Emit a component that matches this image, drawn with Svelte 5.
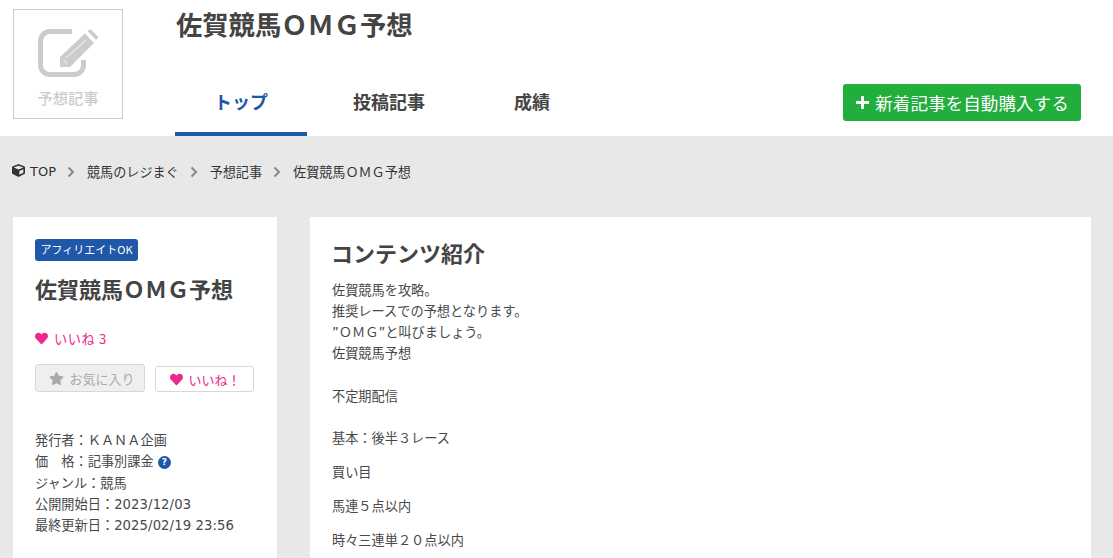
<script>
  const crumbs = ['競馬のレジまぐ', '予想記事', '佐賀競馬ＯＭＧ予想'];
  const body = ['佐賀競馬を攻略。', '推奨レースでの予想となります。', '”ＯＭＧ”と叫びましょう。', '佐賀競馬予想', '', '不定期配信', ''];
  const paras = ['基本：後半３レース', '買い目', '馬連５点以内', '時々三連単２０点以内'];
  const heart = 'M462.3 62.6C407.5 15.9 326 24.3 275.7 76.2L256 96.5l-19.7-20.3C186.1 24.3 104.5 15.9 49.7 62.6c-62.8 53.6-66.1 149.8-9.9 207.9l193.5 199.8c12.5 12.9 32.8 12.9 45.3 0l193.5-199.8c56.3-58.1 53-154.3-9.8-207.9z';
</script>

<div class="page">
  <header class="header">
    <div class="logo">
      <svg class="edit" viewBox="0 0 61 48" aria-hidden="true">
        <path class="edit-box" d="M34 2.500H12A9.500 9.500 0 0 0 2.500 12V36A9.500 9.500 0 0 0 12 45.500H36A9.500 9.500 0 0 0 45.500 36V31"/>
        <path class="edit-pen" d="M22 28 47 4.500 56 14 32 38H22Z"/>
        <path class="edit-pen" d="M49.500 2 52.500 0 60.500 8 58 11Z"/>
        <path class="edit-line" d="M28 29 48 11"/>
        <path class="edit-line" d="M25.500 31 29 35"/>
      </svg>
      <span class="logo-text">予想記事</span>
    </div>
    <div class="head-main">
      <h1>佐賀競馬ＯＭＧ予想</h1>
      <div class="nav-row">
        <nav class="tabs">
          <a class="tab active">トップ</a>
          <a class="tab second">投稿記事</a>
          <a class="tab third">成績</a>
        </nav>
        <button class="buy">
          <svg class="plus" viewBox="0 0 16 16" aria-hidden="true"><path d="M8 1v14M1 8h14"/></svg>
          新着記事を自動購入する
        </button>
      </div>
    </div>
  </header>

  <div class="crumbs">
    <svg class="cube" viewBox="0 0 512 512" aria-hidden="true"><path d="M239.1 6.3l-208 78c-18.7 7-31.1 25-31.1 45v225.1c0 18.2 10.3 34.8 26.5 42.9l208 104c13.5 6.8 29.4 6.8 42.9 0l208-104c16.3-8.1 26.5-24.8 26.5-42.9V129.3c0-20-12.4-37.9-31.1-44.9l-208-78C262 2.2 250 2.2 239.1 6.3zM256 68.4l192 72v1.1l-192 78-192-78v-1.1l192-72zm32 356V275.5l160-65v133.9l-160 80z"/></svg>
    <span>TOP</span>
    {#each crumbs as c}
      <svg class="chev" viewBox="0 0 8 12" aria-hidden="true"><path d="M1.500 1.500L6 6l-4.500 4.500"/></svg>
      <span>{c}</span>
    {/each}
  </div>

  <main class="columns">
    <aside class="card side">
      <span class="badge">アフィリエイトOK</span>
      <h2 class="side-title">佐賀競馬ＯＭＧ予想</h2>
      <div class="likes">
        <svg class="ico" viewBox="0 0 512 512" aria-hidden="true"><path d={heart}/></svg>
        <span>いいね 3</span>
      </div>
      <div class="actions">
        <button class="fav">
          <svg class="ico star" viewBox="0 0 576 512" aria-hidden="true"><path d="M259.3 17.8L194 150.2 47.9 171.5c-26.2 3.8-36.7 36.1-17.7 54.6l105.7 103-25 145.5c-4.5 26.3 23.2 46 46.4 33.7L288 439.600l130.7 68.7c23.2 12.2 50.9-7.4 46.4-33.7l-25-145.5 105.7-103c19-18.5 8.5-50.8-17.7-54.6L382 150.2 316.7 17.8c-11.7-23.6-45.6-23.9-57.4 0z"/></svg>
          お気に入り
        </button>
        <button class="like">
          <svg class="ico" viewBox="0 0 512 512" aria-hidden="true"><path d={heart}/></svg>
          いいね！
        </button>
      </div>
      <div class="meta">
        <div>発行者：ＫＡＮＡ企画</div>
        <div>価　格：記事別課金 <span class="help">?</span></div>
        <div>ジャンル：競馬</div>
        <div>公開開始日：<span class="num">2023/12/03</span></div>
        <div>最終更新日：<span class="num">2025/02/19 23:56</span></div>
      </div>
    </aside>

    <section class="card content">
      <h2 class="content-title">コンテンツ紹介</h2>
      <div class="lines">
        {#each body as l}
          <div class="line">{l}</div>
        {/each}
      </div>
      {#each paras as p}
        <p>{p}</p>
      {/each}
    </section>
  </main>
</div>

<style>
  :global(body) {
    margin: 0;
    background: #e8e8e8;
  }
  .page {
    height: 558px;
    overflow: hidden;
    font-family: "DejaVu Sans", "Noto Sans CJK JP", sans-serif;
    font-size: 13.2px;
    color: #484848;
  }
  .header {
    height: 136px;
    background: #fff;
    display: flex;
    box-sizing: border-box;
    padding-left: 13px;
  }
  .logo {
    box-sizing: border-box;
    width: 110px;
    height: 110px;
    margin-top: 9px;
    border: 1px solid #ccc;
    display: flex;
    flex-direction: column;
    align-items: center;
    padding-top: 19px;
  }
  .edit {
    width: 61px;
    height: 48px;
    flex: none;
    margin-left: 1px;
  }
  .edit-box {
    fill: none;
    stroke: #ccc;
    stroke-width: 5;
  }
  .edit-pen {
    fill: #ccc;
  }
  .edit-line {
    fill: none;
    stroke: #e6e6e6;
    stroke-width: 1.5;
  }
  .logo-text {
    font-family: "Noto Sans CJK JP", sans-serif;
    font-size: 15.300px;
    font-weight: 500;
    line-height: 20px;
    margin-top: 10px;
    color: #ccc;
  }
  .head-main {
    flex: 1;
    margin-left: 52px;
    margin-right: 32px;
    display: flex;
    flex-direction: column;
    min-width: 0;
  }
  h1 {
    margin: 6px 0 0 1px;
    font-family: "Noto Sans CJK JP", sans-serif;
    font-size: 26.300px;
    font-weight: 700;
    line-height: 36px;
    color: #444;
  }
  .nav-row {
    margin-top: auto;
    display: flex;
    justify-content: space-between;
    align-items: flex-start;
  }
  .tabs {
    display: flex;
    height: 64px;
  }
  .tab {
    box-sizing: border-box;
    height: 64px;
    padding: 16px 40px 0;
    font-family: "Noto Sans CJK JP", sans-serif;
    font-size: 18px;
    font-weight: 700;
    line-height: 26px;
    color: #444;
  }
  .tab.active {
    color: #1f58a8;
    border-bottom: 4px solid #1f58a8;
    padding: 16px 39px 0;
  }
  .tab.second {
    margin-left: 6px;
  }
  .tab.third {
    margin-left: 9px;
  }
  .buy {
    box-sizing: border-box;
    width: 238px;
    height: 37px;
    margin-top: 12px;
    border: 0;
    border-radius: 3px;
    background: #22ae3c;
    color: #fff;
    font-family: "Noto Sans CJK JP", sans-serif;
    font-size: 17.600px;
    line-height: 37px;
    padding: 0;
    display: flex;
    align-items: center;
    justify-content: center;
    gap: 5px;
  }
  .plus {
    width: 15px;
    height: 15px;
    fill: none;
    stroke: #fff;
    stroke-width: 3;
  }
  .crumbs {
    height: 81px;
    box-sizing: border-box;
    padding: 26px 0 0 12px;
    display: flex;
    align-items: flex-start;
    font-size: 13.100px;
    line-height: 20px;
    color: #333;
    font-family: "Noto Sans CJK JP", sans-serif;
  }
  .crumbs span:first-of-type {
    font-family: "DejaVu Sans", sans-serif;
    font-size: 13px;
    margin-left: 5px;
  }
  .cube {
    width: 13px;
    height: 13px;
    margin-top: 2px;
    fill: #333;
  }
  .chev {
    width: 8px;
    height: 12px;
    margin: 4px 12px 0 11px;
    fill: none;
    stroke: #888;
    stroke-width: 2;
  }
  .columns {
    display: flex;
    padding-left: 13px;
    gap: 33px;
    align-items: flex-start;
  }
  .card {
    background: #fff;
    box-sizing: border-box;
    height: 400px;
  }
  .side {
    width: 264px;
    padding: 22px 22px 0;
  }
  .badge {
    display: block;
    width: 103px;
    height: 22px;
    box-sizing: border-box;
    background: #1f58a8;
    border-radius: 3px;
    color: #fff;
    font-family: "Noto Sans CJK JP", sans-serif;
    font-size: 11px;
    line-height: 21px;
    text-align: center;
    white-space: nowrap;
  }
  .side-title {
    margin: 12px 0 0;
    font-family: "Noto Sans CJK JP", sans-serif;
    font-size: 22px;
    line-height: 30px;
    font-weight: 700;
    color: #444;
  }
  .likes {
    margin-top: 25px;
    height: 20px;
    display: flex;
    align-items: center;
    gap: 6px;
    color: #f0288c;
    font-family: "Noto Sans CJK JP", sans-serif;
    letter-spacing: 0.6px;
  }
  .ico {
    width: 13px;
    height: 13px;
    fill: #f0288c;
    flex: none;
  }
  .actions {
    margin-top: 16px;
    display: flex;
    align-items: flex-end;
    gap: 10px;
  }
  button {
    font-family: "Noto Sans CJK JP", sans-serif;
    font-size: 13px;
  }
  .fav {
    box-sizing: border-box;
    width: 110px;
    height: 28px;
    background: #efefef;
    border: 1px solid #d8d8d8;
    border-radius: 3px;
    color: #aaa;
    display: flex;
    align-items: center;
    justify-content: center;
    gap: 5px;
    padding: 0 0 0 4px;
  }
  .star {
    width: 15px;
    fill: #aaa;
  }
  .like {
    box-sizing: border-box;
    width: 99px;
    height: 26px;
    background: #fff;
    border: 1px solid #d8d8d8;
    border-radius: 3px;
    color: #f0288c;
    display: flex;
    align-items: center;
    justify-content: center;
    gap: 5px;
    padding: 0 0 0 2px;
  }
  .meta {
    margin: 38px 0 0;
    line-height: 21.250px;
    white-space: nowrap;
  }
  .num {
    letter-spacing: 0.1px;
  }
  .help {
    display: inline-block;
    width: 13px;
    height: 13px;
    border-radius: 50%;
    background: #1f58a8;
    color: #fff;
    font-size: 9px;
    font-weight: 700;
    line-height: 13px;
    text-align: center;
    vertical-align: 1px;
  }
  .content {
    width: 781px;
    padding: 18px 21px 0 22px;
  }
  .content-title {
    margin: 0 0 0 -1px;
    font-family: "Noto Sans CJK JP", sans-serif;
    font-size: 22px;
    line-height: 34px;
    font-weight: 700;
    color: #444;
  }
  .lines {
    margin-top: 11px;
    line-height: 21.130px;
  }
  .line {
    min-height: 21.130px;
  }
  p {
    margin: 0 0 13px;
    line-height: 21.130px;
  }
</style>
